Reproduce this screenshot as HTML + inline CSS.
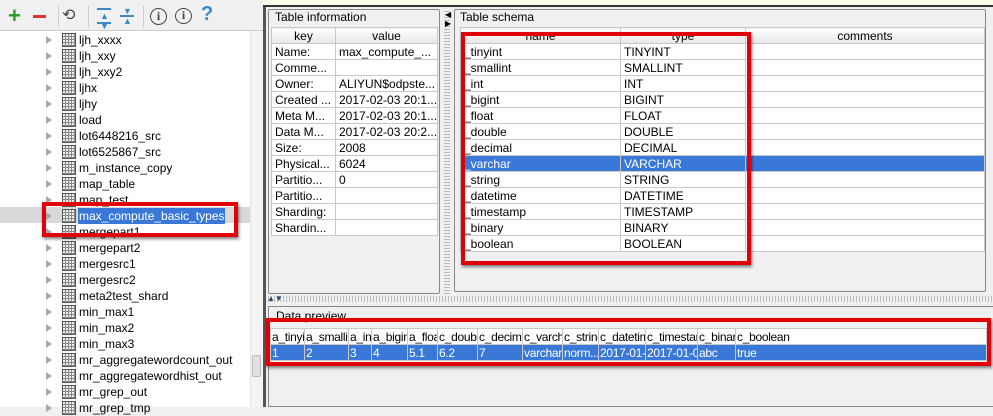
<!DOCTYPE html>
<html><head><meta charset="utf-8"><style>
*{margin:0;padding:0;box-sizing:border-box}
body{width:993px;height:407px;overflow:hidden;background:#f0f0f0;font-family:"Liberation Sans",Tahoma,sans-serif;font-size:12px;color:#000;position:relative}
.a{position:absolute}
.tr{position:absolute;left:0;height:16px;line-height:16px;white-space:nowrap}
.tr .ar{position:absolute;left:46px;top:4px;width:0;height:0;border-left:6px solid #a8a8a8;border-top:4px solid transparent;border-bottom:4px solid transparent}
.tr .ic{position:absolute;left:62px;top:1px;width:14px;height:14px;border:1px solid #555;background:
linear-gradient(90deg,transparent 2px,#888 2px,#888 3px,transparent 3px) 0 0/3px 3px,
linear-gradient(transparent 2px,#888 2px,#888 3px,transparent 3px) 0 0/3px 3px,#eee}
.tr .t{position:absolute;left:79px;font-size:12px}
table{border-collapse:collapse;position:absolute;table-layout:fixed;background:#fff}
td,th{border:1px solid #c8c8c8;height:16px;padding:0 3px;white-space:nowrap;overflow:hidden;font-weight:normal;font-size:12px;line-height:14px}
th{background:linear-gradient(#fff,#e6e6e6);text-align:center}
.sel td{background:#3a78d8;color:#fff}
.rb{position:absolute;border:4px solid #e0000a;box-shadow:1px 2px 3px rgba(0,0,0,.5)}
.dp td{font-family:"Liberation Sans Narrow","Liberation Sans",sans-serif;font-size:12px;letter-spacing:-0.3px;padding:0 1px;text-overflow:clip}
</style></head><body>
<div class="a" style="left:263px;top:0;width:730px;height:7px;background:#fbf9e8;border-bottom:2px solid #333"></div>
<div class="a" style="left:0;top:0;width:263px;height:31px;background:#f0f0f0;border-bottom:1px solid #ccc"></div>
<div class="a" style="left:8px;top:3px;font-size:22px;color:#2a9a2a;font-weight:bold">+</div>
<div class="a" style="left:33px;top:15px;width:13px;height:3px;background:#d33"></div>
<div class="a" style="left:58px;top:6px;width:1px;height:21px;background:#ccc"></div>
<div class="a" style="left:62px;top:5px;font-size:16px;color:#444">⟲</div>
<div class="a" style="left:88px;top:6px;width:1px;height:21px;background:#ccc"></div>
<div class="a" style="left:97px;top:8px;width:14px;height:2px;background:#3a8ac8"></div>
<div class="a" style="left:97px;top:22px;width:14px;height:2px;background:#3a8ac8"></div>
<div class="a" style="left:100px;top:11px;font-size:9px;color:#3a8ac8;line-height:10px">▲<br>▼</div>
<div class="a" style="left:120px;top:15px;width:14px;height:2px;background:#3a8ac8"></div>
<div class="a" style="left:123px;top:6px;font-size:9px;color:#3a8ac8;line-height:10px">▼<br>▲</div>
<div class="a" style="left:143px;top:6px;width:1px;height:21px;background:#ccc"></div>
<div class="a" style="left:150px;top:8px;width:17px;height:17px;border:1.5px solid #444;border-radius:50%;text-align:center;font:bold 12px/14px 'Liberation Serif',serif;color:#444">i</div>
<div class="a" style="left:175px;top:8px;width:17px;height:16px;border:1.5px solid #444;border-radius:50%;text-align:center;font:bold 12px/13px 'Liberation Serif',serif;color:#444">i</div>
<div class="a" style="left:201px;top:3px;font:bold 20px 'Liberation Sans',sans-serif;color:#3a8ac8">?</div>
<div class="a" style="left:0;top:31px;width:250px;height:376px;background:#fff;overflow:hidden">
<div class="a" style="left:0;top:176px;width:250px;height:16px;background:#d9d9d9"></div>
</div>
<div class="a" style="left:250px;top:31px;width:13px;height:376px;background:#f4f4f4;border-left:1px solid #e4e4e4"></div>
<div class="a" style="left:252px;top:355px;width:9px;height:22px;background:#e0e0e0;border:1px solid #bbb;border-radius:2px"></div>
<div class="a" style="left:263px;top:7px;width:3px;height:400px;background:#555"></div>
<div id="tree"></div>
<div class="a" style="left:268px;top:9px;width:172px;height:285px;border:1px solid #888;border-radius:2px"></div>
<div class="a" style="left:275px;top:10px">Table information</div>
<table style="left:271px;top:27px;width:166px">
<colgroup><col style="width:64px"><col style="width:102px"></colgroup>
<tr><th>key</th><th>value</th></tr>
<tr><td>Name:</td><td>max_compute_...</td></tr>
<tr><td>Comme...</td><td></td></tr>
<tr><td>Owner:</td><td>ALIYUN$odpste...</td></tr>
<tr><td>Created ...</td><td>2017-02-03 20:1...</td></tr>
<tr><td>Meta M...</td><td>2017-02-03 20:1...</td></tr>
<tr><td>Data M...</td><td>2017-02-03 20:2...</td></tr>
<tr><td>Size:</td><td>2008</td></tr>
<tr><td>Physical...</td><td>6024</td></tr>
<tr><td>Partitio...</td><td>0</td></tr>
<tr><td>Partitio...</td><td></td></tr>
<tr><td>Sharding:</td><td></td></tr>
<tr><td>Shardin...</td><td></td></tr>
</table>
<div class="a" style="left:444px;top:9px;width:6px;height:285px;background:repeating-linear-gradient(#f0f0f0 0 2px,#bbb 2px 3px)"></div>
<div class="a" style="left:445px;top:10px;font-size:8px;line-height:9px">◀<br>▶</div>
<div class="a" style="left:454px;top:9px;width:532px;height:283px;border:1px solid #888;border-radius:2px"></div>
<div class="a" style="left:460px;top:10px">Table schema</div>
<table style="left:460px;top:27px;width:524px">
<colgroup><col style="width:160px"><col style="width:125px"><col style="width:239px"></colgroup>
<tr><th>name</th><th>type</th><th>comments</th></tr>
<tr><td>_tinyint</td><td>TINYINT</td><td></td></tr>
<tr><td>_smallint</td><td>SMALLINT</td><td></td></tr>
<tr><td>_int</td><td>INT</td><td></td></tr>
<tr><td>_bigint</td><td>BIGINT</td><td></td></tr>
<tr><td>_float</td><td>FLOAT</td><td></td></tr>
<tr><td>_double</td><td>DOUBLE</td><td></td></tr>
<tr><td>_decimal</td><td>DECIMAL</td><td></td></tr>
<tr class="sel"><td>_varchar</td><td>VARCHAR</td><td></td></tr>
<tr><td>_string</td><td>STRING</td><td></td></tr>
<tr><td>_datetime</td><td>DATETIME</td><td></td></tr>
<tr><td>_timestamp</td><td>TIMESTAMP</td><td></td></tr>
<tr><td>_binary</td><td>BINARY</td><td></td></tr>
<tr><td>_boolean</td><td>BOOLEAN</td><td></td></tr>
</table>
<div class="rb" style="left:461px;top:32px;width:290px;height:233px"></div>
<div class="a" style="left:266px;top:296px;width:727px;height:6px;background:repeating-linear-gradient(90deg,#f0f0f0 0 2px,#bbb 2px 3px)"></div>
<div class="a" style="left:267px;top:294px;font-size:8px;color:#246">▲▼</div>
<div class="a" style="left:268px;top:306px;width:725px;height:101px;border:1px solid #888;border-right:none"></div>
<div class="a" style="left:276px;top:309px">Data preview</div>
<table class="dp" style="left:270px;top:328px;width:716px">
<colgroup><col style="width:34px"><col style="width:44px"><col style="width:23px"><col style="width:36px"><col style="width:30px"><col style="width:40px"><col style="width:45px"><col style="width:40px"><col style="width:36px"><col style="width:47px"><col style="width:52px"><col style="width:38px"><col style="width:251px"></colgroup>
<tr><td>a_tinyint</td><td>a_smallint</td><td>a_int</td><td>a_bigint</td><td>a_float</td><td>c_double</td><td>c_decimal</td><td>c_varchar</td><td>c_string</td><td>c_datetime</td><td>c_timestamp</td><td>c_binary</td><td>c_boolean</td></tr>
<tr class="sel"><td>1</td><td>2</td><td>3</td><td>4</td><td>5.1</td><td>6.2</td><td>7</td><td>varchar...</td><td>norm...</td><td>2017-01-...</td><td>2017-01-02...</td><td>abc</td><td>true</td></tr>
</table>
<div class="rb" style="left:266px;top:318px;width:725px;height:48px"></div>
<script>
var n=["ljh_xxxx","ljh_xxy","ljh_xxy2","ljhx","ljhy","load","lot6448216_src","lot6525867_src","m_instance_copy","map_table","map_test","max_compute_basic_types","mergepart1","mergepart2","mergesrc1","mergesrc2","meta2test_shard","min_max1","min_max2","min_max3","mr_aggregatewordcount_out","mr_aggregatewordhist_out","mr_grep_out","mr_grep_tmp"];
var h="";n.forEach(function(s,i){var y=32+i*16;var t=i==11?'<span class="t" style="background:#3a78d8;color:#fff;padding:0 1px;left:78px">'+s+'</span>':'<span class="t">'+s+'</span>';h+='<div class="tr" style="top:'+y+'px;width:250px"><span class="ar"></span><span class="ic"></span>'+t+'</div>';});
document.getElementById('tree').innerHTML=h;
</script>
<div class="rb" style="left:42px;top:202px;width:196px;height:35px"></div>
</body></html>
